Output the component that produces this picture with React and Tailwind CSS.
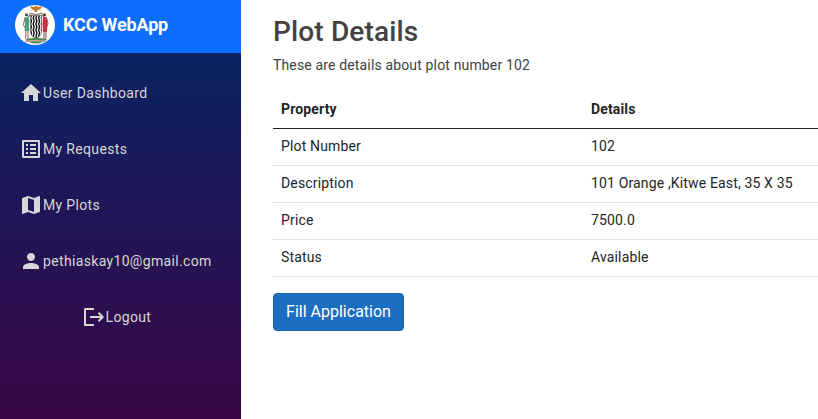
const icons = {
  home: 'M10 20v-6h4v6h5v-8h3L12 3 2 12h3v8z',
  list: 'M19 5v14H5V5h14m1.1-2H3.9c-.5 0-.9.4-.9.9v16.2c0 .4.4.9.9.9h16.2c.4 0 .9-.5.9-.9V3.9c0-.5-.5-.9-.9-.9zM11 7h6v2h-6V7zm0 4h6v2h-6v-2zm0 4h6v2h-6zM7 7h2v2H7zm0 4h2v2H7zm0 4h2v2H7z',
  map: 'M20.5 3l-.16.03L15 5.1 9 3 3.36 4.9c-.21.07-.36.25-.36.48V20.5c0 .28.22.5.5.5l.16-.03L9 18.9l6 2.1 5.64-1.9c.21-.07.36-.25.36-.48V3.5c0-.28-.22-.5-.5-.5zM15 19l-6-2.11V5l6 2.11V19z',
  person: 'M12 12c2.21 0 4-1.79 4-4s-1.79-4-4-4-4 1.79-4 4 1.79 4 4 4zm0 2c-2.67 0-8 1.34-8 4v2h16v-2c0-2.66-5.33-4-8-4z',
};

function Icon({ name }) {
  return (
    <svg viewBox="0 0 24 24" className="h-6 w-6 shrink-0" fill="currentColor">
      {name === 'logout' ? (
        <path d="M13 4H4v16h9M9 12h12.500M17.500 7.800L21.700 12l-4.200 4.200" fill="none" stroke="currentColor" strokeWidth="2" strokeLinejoin="round" />
      ) : (
        <path d={icons[name]} />
      )}
    </svg>
  );
}

function Crest() {
  return (
    <svg viewBox="0 0 40 40" className="h-10 w-10 shrink-0">
      <defs>
        <clipPath id="disc"><circle cx="20" cy="20" r="20" /></clipPath>
        <clipPath id="shield"><path d="M15.500 10.500h11v17q-.5 4-5.500 6-5-2-5.500-6z" /></clipPath>
      </defs>
      <g clipPath="url(#disc)">
        <rect width="40" height="40" fill="#fff" />
        <path d="M10 35q3-2.500 11-2 8-.5 11 1.500l-4 2.500q-7 3-14 0z" fill="#4c8a4e" />
        <path d="M10 36.500l11-1 11 1" stroke="#c9a696" strokeWidth="1.400" fill="none" />
        <path d="M14 8l14 3M28 8l-14 3" stroke="#8a7a68" strokeWidth="1" />
        <path d="M15 1l4 1 2-1.500 2 1.500 5-1-3 3.500-3 1v1.500h-2.500V5.500l-2.500-1z" fill="#c8792b" />
        <g clipPath="url(#shield)">
          <rect x="14" y="8" width="14" height="27" fill="#fff" />
          {[15.5, 18.2, 20.9, 23.6, 26.3].map((x) => (
            <path key={x} d={`M${x} 8l1 2-1 3 1 3-1 3 1 3-1 3 1 3-1 3 1 3`} stroke="#111" strokeWidth="1.400" fill="none" />
          ))}
        </g>
        <path d="M15.500 10.500h11v17q-.5 4-5.500 6-5-2-5.500-6z" fill="none" stroke="#555" strokeWidth=".5" />
        <path d="M12 13l3.500-4M30 13l-3-3.500" stroke="#6a4a3a" strokeWidth="1" />
        <circle cx="11.500" cy="9.800" r="1.500" fill="#5b4238" />
        <path d="M10 12.500l3.500-.5 1 4-.5 5 .5 5h-5l.500-6z" fill="#4fa27e" />
        <path d="M11 26l-.5 8M13 26v8" stroke="#94665a" strokeWidth="1.100" />
        <circle cx="29.500" cy="9.800" r="1.500" fill="#5b3028" />
        <path d="M28 12h3.500l1 5-.5 10h-4l-.5-8z" fill="#c23347" />
        <path d="M29 27v7M31 27v7" stroke="#94564e" strokeWidth="1.100" />
        <path d="M10 12.500l-1.500 7 1 3M31.500 12.500l1.500 6-1 3" fill="none" stroke="#805048" strokeWidth=".9" />
      </g>
    </svg>
  );
}

const links = [
  ['home', 'User Dashboard'],
  ['list', 'My Requests'],
  ['map', 'My Plots'],
  ['person', 'pethiaskay10@gmail.com'],
];

const rows = [
  ['Plot Number', '102'],
  ['Description', '101 Orange ,Kitwe East, 35 X 35'],
  ['Price', '7500.0'],
  ['Status', 'Available'],
];

export default function App() {
  return (
    <div className="flex h-[419px] w-[818px] overflow-hidden bg-white font-['Roboto',sans-serif] text-sm leading-5 tracking-[0.15px]">
      <aside className="flex w-[241px] shrink-0 flex-col bg-[linear-gradient(180deg,#052767_0%,#3a0647_100%)] tracking-[0.34px] text-[#d7d7d7]">
        <header className="flex h-[53px] shrink-0 items-center gap-2 bg-[#0d6efd] pb-[3px] pl-[15px] text-white">
          <Crest />
          <span className="text-lg font-bold tracking-[-0.15px]">KCC WebApp</span>
        </header>
        <nav className="flex flex-col pt-3">
          {links.map(([icon, label]) => (
            <a key={label} className="flex h-14 items-center pl-[19px]">
              <Icon name={icon} />
              {label}
            </a>
          ))}
          <a className="flex h-14 items-center gap-[0.5px] pl-[81px]">
            <Icon name="logout" />
            Logout
          </a>
        </nav>
      </aside>
      <main className="flex-1 pl-8 pt-[15px]">
        <h1 className="text-[28px] font-medium leading-[34px] tracking-[0.15px] text-[#424242]">Plot Details</h1>
        <p className="mt-[6px] text-[#424242]">These are details about plot number 102</p>
        <table className="mt-4 w-full table-fixed text-[#212529]">
          <thead>
            <tr className="h-[37px] border-b border-[#212529] text-left">
              <th className="w-[310px] px-2 font-bold">Property</th>
              <th className="px-2 font-bold">Details</th>
            </tr>
          </thead>
          <tbody>
            {rows.map(([property, detail]) => (
              <tr key={property} className="h-[37px] border-b border-[#dee2e6]">
                <td className="px-2 pb-0.5">{property}</td>
                <td className="px-2 pb-0.5">{detail}</td>
              </tr>
            ))}
          </tbody>
        </table>
        <button className="mt-4 h-[38px] w-[131px] rounded border border-[#1861ac] bg-[#1b6ec2] text-base tracking-normal text-white">Fill Application</button>
      </main>
    </div>
  );
}
